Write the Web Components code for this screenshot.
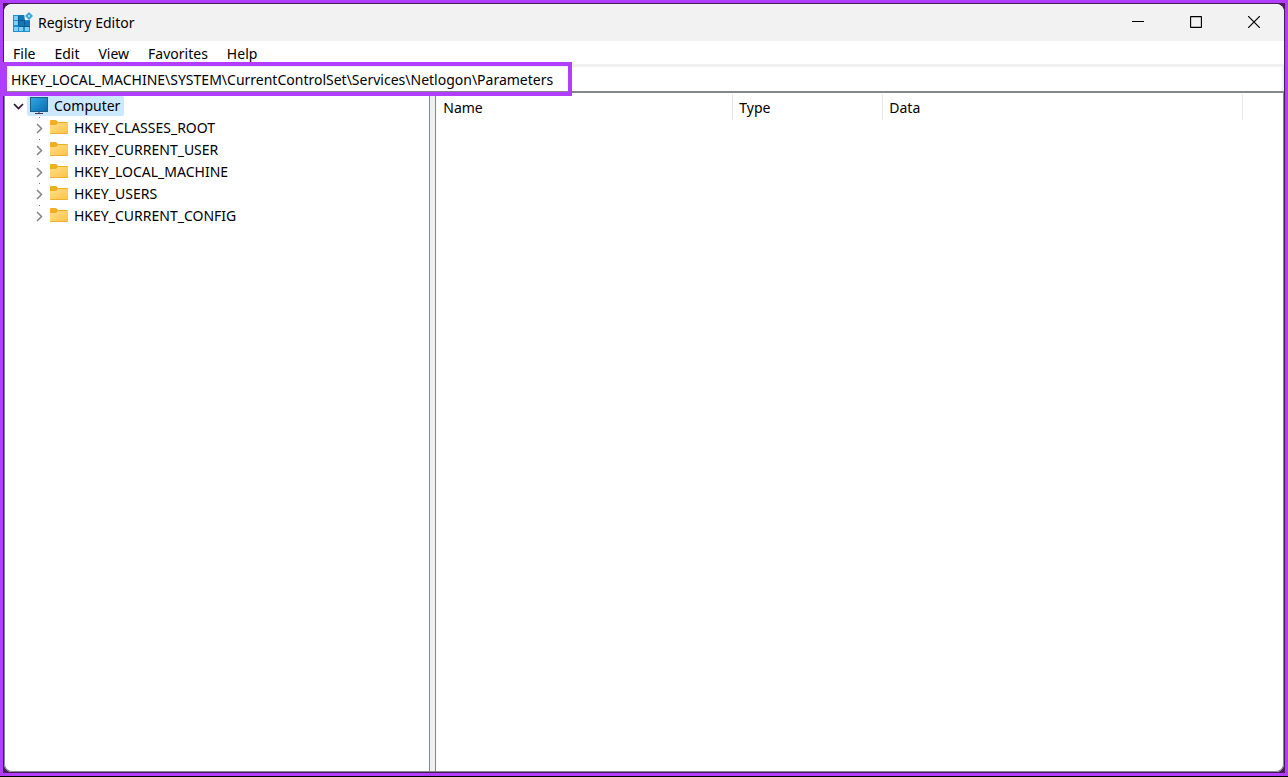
<!DOCTYPE html>
<html lang="en">
<head>
<meta charset="utf-8">
<title>Registry Editor</title>
<style>
  html, body { height: 100%; margin: 0; }
  body {
    background: #b13dff;
    font: 14px/22px "Noto Sans", "Open Sans", sans-serif;
    color: #000;
  }
</style>
</head>
<body>
<registry-window>
  <title-bar slot="title">Registry Editor</title-bar>
  <menu-bar slot="menu"></menu-bar>
  <address-bar slot="address" value="HKEY_LOCAL_MACHINE\SYSTEM\CurrentControlSet\Services\Netlogon\Parameters"></address-bar>
  <key-tree slot="tree">
    <tree-root slot="root">Computer</tree-root>
    <tree-key>HKEY_CLASSES_ROOT</tree-key>
    <tree-key>HKEY_CURRENT_USER</tree-key>
    <tree-key>HKEY_LOCAL_MACHINE</tree-key>
    <tree-key>HKEY_USERS</tree-key>
    <tree-key>HKEY_CURRENT_CONFIG</tree-key>
  </key-tree>
  <value-list slot="values"></value-list>
</registry-window>

<script>
const define = (name, html) => customElements.define(name, class extends HTMLElement {
  constructor() {
    super();
    const t = document.createElement('template');
    t.innerHTML = html;
    this.attachShadow({ mode: 'open' }).append(t.content.cloneNode(true));
  }
  connectedCallback() {
    const input = this.shadowRoot.querySelector('input');
    if (input && this.hasAttribute('value')) input.value = this.getAttribute('value');
  }
});

define('registry-window', `
<style>
  :host { display: block; box-sizing: border-box; height: 100vh; padding: 3px; border-bottom: 1px solid #000; background: #b13dff; }
  .back { height: 100%; box-sizing: border-box; background: #4a1a5c; padding: 1px; }
  .window { display: flex; flex-direction: column; height: 100%; box-sizing: border-box; background: #fff; border-radius: 8px; }
  .body { flex: 1; display: flex; min-height: 0; border: 1px solid #828790; border-top-width: 2px; border-radius: 0 0 8px 8px; }
  .tree { flex: none; width: 33.2%; overflow: hidden; }
  .split { flex: none; width: 5px; background: #f0f0f0; border: solid #828790; border-width: 0 1px; }
  .values { flex: 1; min-width: 0; }
</style>
<div class="back"><div class="window">
  <slot name="title"></slot>
  <slot name="menu"></slot>
  <slot name="address"></slot>
  <div class="body">
    <div class="tree"><slot name="tree"></slot></div>
    <div class="split"></div>
    <div class="values"><slot name="values"></slot></div>
  </div>
</div></div>`);

define('title-bar', `
<style>
  :host { display: flex; align-items: center; height: 37px; background: #f2f2f2; border-radius: 8px 8px 0 0; padding: 0 1px 0 9px; }
  .logo { width: 20px; height: 19px; margin-right: 5px; overflow: visible; }
  .name { flex: 1; }
  button { width: 58px; height: 36px; padding: 0; border: 0; background: none; display: flex; align-items: center; justify-content: center; align-self: flex-start; }
</style>
<svg class="logo" viewBox="0 0 20 19">
  <path fill="#1e8fd2" d="M0 2h12v4h5v13H0z"/>
  <path fill="#7fd0f8" d="M1 3h4v4H1zM1 8h4v4H1zM1 14h4v4H1zM6 14h4v4H6zM12 14h4v4h-4z"/>
  <path fill="#1577b8" d="M6 2h6v5H6zM6 8h5v5H6zM12 8h5v5h-5z"/>
  <path fill="#0a5a98" d="M6 7h6v1H6zM11 7h1v6h-1zM5 3h1v10H5zM6 13h11v1H6z"/>
  <path fill="#f2f2f2" d="M11 1h1l5 6h-5z"/>
  <path fill="#3ba6de" d="M16 -1l4 4-4 4-4-4z"/>
  <path fill="#9ae0fb" d="M15 2h2v2h-2z"/>
</svg>
<span class="name"><slot></slot></span>
<button aria-label="Minimize"><svg width="12" height="12"><path d="M0 5.500h12" stroke="#000"/></svg></button>
<button aria-label="Maximize"><svg width="12" height="12"><rect x=".5" y=".5" width="11" height="11" rx="1" fill="none" stroke="#000" stroke-width="1.300"/></svg></button>
<button aria-label="Close"><svg width="12" height="12"><path d="M0 0l12 12M12 0L0 12" stroke="#000" stroke-width="1.200"/></svg></button>`);

define('menu-bar', `
<style>
  :host { display: block; height: 23px; }
  nav { display: flex; gap: 19px; padding: 2px 0 0 9px; }
  button { font: inherit; color: inherit; border: 0; background: none; padding: 0; }
</style>
<nav><button>File</button><button>Edit</button><button>View</button><button>Favorites</button><button>Help</button></nav>`);

define('address-bar', `
<style>
  :host { display: block; position: relative; height: 27px; box-sizing: border-box; border: solid #f0f0f0; border-width: 3px 2px 0; }
  input { display: block; width: 100%; height: 24px; box-sizing: border-box; border: 0; outline: 0; padding: 0 5px; font: inherit; color: inherit; background: #fff; }
  .mark { position: absolute; left: -3px; top: -5px; width: 561px; height: 26px; border: 4px solid #b13dff; pointer-events: none; }
</style>
<input aria-label="Key path" spellcheck="false">
<div class="mark"></div>`);

define('key-tree', `
<style>
  :host { display: block; padding-top: 2px; }
</style>
<slot name="root"></slot>
<slot></slot>`);

define('tree-root', `
<style>
  :host { display: flex; align-items: center; height: 22px; padding-left: 8px; }
  .chev { width: 11px; height: 11px; margin-right: 3px; }
  .label { display: flex; align-items: center; height: 20px; gap: 6px; padding: 0 4px 0 3px; background: #cce8ff; border-radius: 2px; }
</style>
<svg class="chev" viewBox="0 0 11 11"><path d="M1 3l4.500 4.500L10 3" fill="none" stroke="#2b1030" stroke-width="1.700"/></svg>
<span class="label">
  <svg width="18" height="18" viewBox="0 0 18 18">
    <defs><linearGradient id="g" x1="0" y1="0" x2="1" y2="1"><stop offset="0" stop-color="#2fa9e6"/><stop offset="1" stop-color="#0b6cb0"/></linearGradient></defs>
    <rect x=".5" y=".5" width="17" height="14" fill="url(#g)" stroke="#1e5f8c"/>
    <path d="M8 15h2v1H8z" fill="#8a9299"/><path d="M5 16h8v1H5z" fill="#4c2f55"/>
  </svg><slot></slot>
</span>`);

define('tree-key', `
<style>
  :host { display: flex; align-items: center; height: 22px; padding-left: 29px; position: relative; }
  :host::before { content: ""; position: absolute; left: 34px; top: 0; width: 1px; height: 1px; background: #777; }
  .chev { width: 11px; height: 11px; margin-right: 5px; }
  .folder { width: 18px; height: 16px; margin-right: 6px; }
</style>
<svg class="chev" viewBox="0 0 11 11"><path d="M3 1l4.500 4.500L3 10" fill="none" stroke="#858585" stroke-width="1.500"/></svg>
<svg class="folder" viewBox="0 0 18 16">
  <defs><linearGradient id="f" x1="0" y1="0" x2="1" y2="1"><stop offset="0" stop-color="#ffe08a"/><stop offset="1" stop-color="#ffc043"/></linearGradient></defs>
  <path d="M0 1q0-1 1-1h5l2 2h9q1 0 1 1v5H0z" fill="#efaf22"/>
  <path d="M0 5h6l2-2h10v10q0 1-1 1H1q-1 0-1-1z" fill="url(#f)"/>
  <path d="M0 13h18q0 1-1 1H1q-1 0-1-1z" fill="#f0b030"/>
</svg><slot></slot>`);

define('value-list', `
<style>
  :host { display: block; padding: 1px 0 0; }
  table { border-collapse: collapse; table-layout: fixed; width: 807px; }
  th { font-weight: 400; text-align: left; padding: 3px 0 1px 7px; height: 22px; box-sizing: content-box; border-right: 1px solid #e8e8e8; }
  th:nth-child(1) { width: 289px; }
  th:nth-child(2) { width: 143px; }
  th:nth-child(n + 2) { padding-left: 6px; }
</style>
<table><thead><tr><th>Name</th><th>Type</th><th>Data</th></tr></thead></table>`);
</script>
</body>
</html>
